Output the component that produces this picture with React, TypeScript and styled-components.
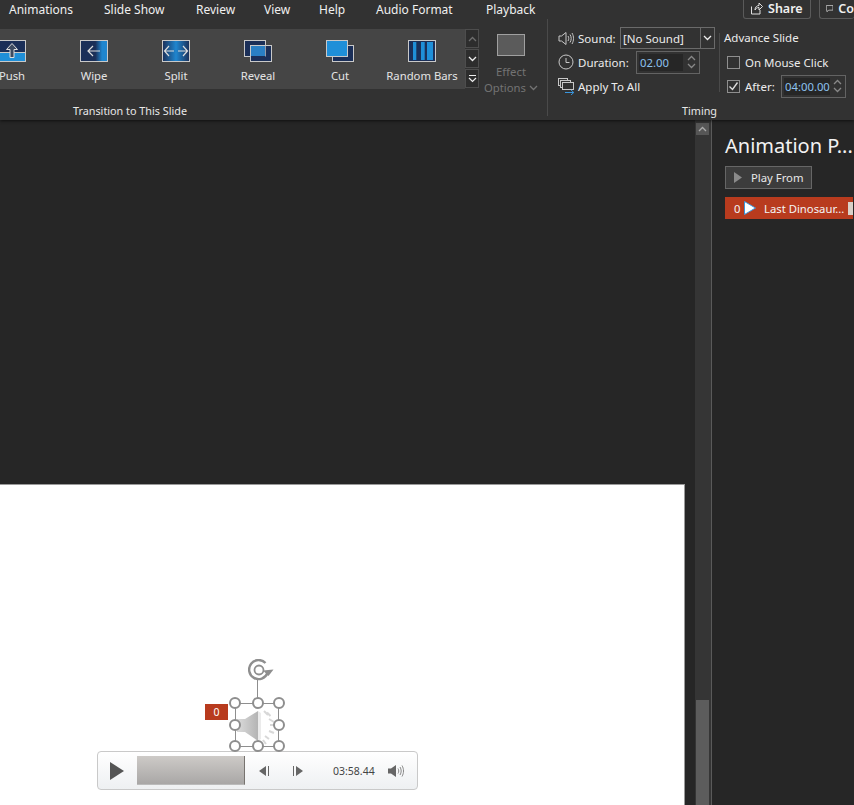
import React from "react";
import styled, { createGlobalStyle } from "styled-components";

const Global = createGlobalStyle`
  html, body { margin: 0; padding: 0; background: #262626; }
  body { font-family: "Noto Sans", "Open Sans", "Liberation Sans", sans-serif; overflow: hidden; }
  * { box-sizing: border-box; }
`;

const Page = styled.div`
  width: 854px; height: 805px; display: flex; flex-direction: column; overflow: hidden; background: #262626;
`;
const Ribbon = styled.header`
  height: 120px; flex: none; background: #323232; display: flex; flex-direction: column; position: relative;
  box-shadow: 0 1px 3px rgba(0,0,0,.6); z-index: 2;
`;
const TabBar = styled.nav`
  height: 19px; flex: none; display: flex; align-items: center; position: relative;
`;
const Tab = styled.span<{ $w: number }>`
  width: ${p => p.$w}px; flex: none; font-size: 12px; color: #f0f0f0; white-space: nowrap; line-height: 17px;
`;
const TabSpacer = styled.div`width: 9px; flex: none;`;
const TopActions = styled.div`
  margin-left: auto; display: flex; gap: 8px; height: 20px; margin-top: -1px; align-self: flex-start;
`;
const TopButton = styled.div<{ $w: number }>`
  width: ${p => p.$w}px; height: 20px; border: 1px solid #5a5a5a; border-top: none; border-radius: 0 0 3px 3px;
  border-right-width: ${p => (p.$w < 60 ? 0 : 1)}px;
  display: flex; align-items: center; gap: 5px; padding-left: 6px; font-size: 12.5px; font-weight: 600; color: #f0f0f0; overflow: hidden;
`;
const Groups = styled.div`flex: 1; display: flex; min-height: 0;`;
const TransitionGroup = styled.section`
  width: 548px; flex: none; border-right: 1px solid #4a4a4a; margin-bottom: 4px; display: flex; flex-direction: column;
`;
const TransitionRow = styled.div`
  display: flex; margin-top: 10px; height: 60px;
`;
const Gallery = styled.div`
  width: 465px; height: 60px; background: #454545; overflow: hidden; flex: none;
`;
const GalleryStrip = styled.div`
  display: flex; margin-left: -29px; height: 60px;
`;
const GalleryItem = styled.div`
  width: 82px; flex: none; display: flex; flex-direction: column; align-items: center; padding-top: 11px; gap: 6px;
  font-size: 11.3px; line-height: 16px; color: #e4e4e4; white-space: nowrap;
`;
const GalleryScroll = styled.div`
  width: 14px; flex: none; display: flex; flex-direction: column; gap: 1px;
`;
const ScrollButton = styled.div<{ $dim?: boolean }>`
  height: 19px; background: #2d2d2d; border: 1px solid #4d4d4d; display: flex; align-items: center; justify-content: center;
  color: ${p => (p.$dim ? "#6e6e6e" : "#eee")};
`;
const EffectOptions = styled.div`
  width: 56px; margin-left: 4px; flex: none; display: flex; flex-direction: column; align-items: center;
  font-size: 11.3px; line-height: 16px; color: #737373; padding-top: 5px; white-space: nowrap;
`;
const EffectIcon = styled.div`
  width: 28px; height: 22px; flex: none; background: #5b5b5b; border: 1px solid #a0a0a0; margin-bottom: 8px;
`;
const OptionsLine = styled.span`display: flex; align-items: center; gap: 3px;`;
const GroupLabel = styled.div<{ $w?: number }>`
  font-size: 10.8px; line-height: 14px; color: #e8e8e8; text-align: center; white-space: nowrap;
  ${p => (p.$w ? `width: ${p.$w}px;` : "")}
`;
const TransitionLabel = styled(GroupLabel)`margin-top: 15px;`;
const TimingLabel = styled(GroupLabel)`margin-top: 6px;`;
const TimingGroup = styled.section`
  flex: 1; display: flex; flex-direction: column; padding-left: 10px; min-width: 0;
`;
const TimingBody = styled.div`display: flex; height: 72px; margin-top: 7px;`;
const TimingLeft = styled.div`width: 161px; flex: none; display: flex; flex-direction: column;`;
const TimingRight = styled.div`
  flex: 1; display: flex; flex-direction: column; border-left: 1px solid #4a4a4a; padding-left: 4px; margin: 7px 0 0 0; height: 59px;
`;
const FieldRow = styled.div<{ $h?: number }>`
  display: flex; align-items: center; height: ${p => p.$h ?? 24}px; font-size: 11.5px; color: #ececec; white-space: nowrap;
`;
const RowIcon = styled.span`width: 20px; flex: none; display: flex; align-items: center;`;
const RowText = styled.span<{ $w?: number }>`
  ${p => (p.$w ? `width: ${p.$w}px; flex: none;` : "")}
`;
const SelectBox = styled.div`
  width: 95px; height: 22px; border: 1px solid #6a6a6a; display: flex; align-items: center; font-size: 11.5px; color: #ececec;
`;
const SelectValue = styled.span`flex: 1; padding-left: 2px;`;
const SelectArrow = styled.span`
  width: 14px; height: 100%; border-left: 1px solid #6a6a6a; display: flex; align-items: center; justify-content: center;
`;
const Spinner = styled.div<{ $w: number }>`
  width: ${p => p.$w}px; height: 23px; flex: none; border: 1px solid #636363; display: flex; align-items: center; padding: 2px 0 2px 2px; font-size: 11.3px;
`;
const SpinValue = styled.span`
  flex: 1; height: 100%; background: #262626; color: #8cc2ee; display: flex; align-items: center; padding-left: 1px;
`;
const SpinArrows = styled.span`
  width: 16px; flex: none; display: flex; flex-direction: column; align-items: center; justify-content: space-around; height: 100%;
`;
const AdvanceTitle = styled.div`flex: none; font-size: 11.5px; color: #ececec; line-height: 16px; margin-top: -3px; height: 16px; margin-bottom: 4px;`;
const CheckRow = styled.div<{ $h: number }>`
  display: flex; flex: none; align-items: center; height: ${p => p.$h}px; padding-left: 3px; gap: 5px; font-size: 11.5px; color: #ececec; white-space: nowrap;
`;
const Check = styled.span`
  width: 13px; height: 13px; border: 1px solid #8f8f8f; flex: none; display: flex; align-items: center; justify-content: center; background: #323232;
`;
const AfterText = styled.span`width: 31px; flex: none;`;

const Workspace = styled.main`flex: 1; display: flex; min-height: 0;`;
const Canvas = styled.div`
  width: 695px; flex: none; padding-top: 364px; overflow: hidden;
`;
const Slide = styled.div`
  width: 685px; height: 321px; background: #fff; border-top: 1px solid #9a9a9a; border-right: 1px solid #9a9a9a; position: relative;
`;
const ScrollTrack = styled.div`
  width: 16px; flex: none; background: #353535; padding: 3px 2px 0 1px; display: flex; flex-direction: column; justify-content: space-between;
`;
const TrackButton = styled.div`
  height: 12px; background: #565656; display: flex; align-items: center; justify-content: center;
`;
const TrackThumb = styled.div`height: 105px; background: #5c5c5c;`;
const Panel = styled.aside`
  flex: 1; border-left: 1px solid #5a5a5a; background: #262626; padding: 11px 0 0 13px; display: flex; flex-direction: column; align-items: flex-start; min-width: 0; overflow: hidden;
`;
const PanelTitle = styled.h2`
  margin: 0; font-weight: 400; font-size: 20px; line-height: 30px; color: #f2f2f2; white-space: nowrap; height: 32px;
`;
const PlayFrom = styled.div`
  width: 87px; height: 23px; margin-top: 3px; background: #3c3c3c; border: 1px solid #666; display: flex; align-items: center; padding-left: 8px; gap: 9px; font-size: 11.3px; color: #e8e8e8; white-space: nowrap;
`;
const AnimRow = styled.div`
  width: 128px; height: 22px; margin-top: 8px; background: #b83b1e; display: flex; align-items: center; padding-left: 9px; font-size: 11.3px; color: #f4f4f4; white-space: nowrap; position: relative;
`;
const AnimOrder = styled.span`width: 10px; flex: none;`;
const AnimName = styled.span`margin-left: 8px;`;
const AnimEnd = styled.span`
  position: absolute; right: 0; top: 5px; width: 5px; height: 13px; background: #d9d0c8;
`;

const Handle = styled.span<{ $x: number; $y: number }>`
  position: absolute; left: ${p => p.$x - 6}px; top: ${p => p.$y - 6}px; width: 12px; height: 12px; border-radius: 50%;
  background: #fff; border: 2px solid #8e8e8e; z-index: 2;
`;
const SelectFrame = styled.div`
  position: absolute; left: 235px; top: 218px; width: 44px; height: 44px; border: 1px solid #8e8e8e;
`;
const RotateStem = styled.div`
  position: absolute; left: 257px; top: 195px; width: 1px; height: 20px; background: #8e8e8e;
`;
const RotateIcon = styled.div`position: absolute; left: 248px; top: 174px; display: flex;`;
const SpeakerIcon = styled.div`position: absolute; left: 236px; top: 218px; display: flex;`;
const OrderBadge = styled.div`
  position: absolute; left: 205px; top: 219px; width: 23px; height: 16px; background: #b83b1e; color: #fff; font-size: 10.5px; display: flex; align-items: center; justify-content: center;
`;
const Player = styled.div`
  position: absolute; left: 97px; top: 266px; width: 321px; height: 39px; border: 1px solid #c9c9c9; border-radius: 4px;
  background: linear-gradient(#ffffff, #eef0f2); display: flex; align-items: center; padding-left: 12px;
`;
const ProgressBar = styled.div`
  width: 108px; height: 29px; margin-left: 13px; flex: none; background: linear-gradient(#cdcac7, #a9a7a6); border-right: 1px solid #77736f; border-bottom: 1px solid #bbb;
`;
const PlayerStep = styled.span<{ $ml: number }>`display: flex; margin-left: ${p => p.$ml}px; flex: none;`;
const TimeText = styled.span`
  margin-left: 30px; width: 43px; flex: none; font-size: 10.5px; color: #444; white-space: nowrap;
`;

const Chev = ({ up, c = "currentColor" }: { up?: boolean; c?: string }) => (
  <svg width="9" height="6" viewBox="0 0 9 6">
    <path d={up ? "M1 5L4.5 1.5L8 5" : "M1 1L4.5 4.5L8 1"} fill="none" stroke={c} strokeWidth="1.3" />
  </svg>
);

type Kind = "push" | "wipe" | "split" | "reveal" | "cut" | "bars";
const TransIcon = ({ kind, id }: { kind: Kind; id: string }) => {
  const navy = "#1b2f58", blue = "#1f8fd8", line = "#c9c9c9";
  return (
    <svg width="28" height="22" viewBox="0 0 28 22">
      <defs>
        <linearGradient id={id} x1="0" x2="1" y1="0" y2="0">
          {kind === "wipe" ? (
            <>
              <stop offset="0.55" stopColor={navy} />
              <stop offset="0.8" stopColor="#1f86cf" />
              <stop offset="1" stopColor="#1f86cf" />
            </>
          ) : (
            <>
              <stop offset="0" stopColor={navy} />
              <stop offset="0.5" stopColor="#1f86cf" />
              <stop offset="1" stopColor={navy} />
            </>
          )}
        </linearGradient>
      </defs>
      {kind === "push" && (
        <>
          <rect x="0.5" y="0.5" width="27" height="21" fill={navy} stroke={line} />
          <rect x="1" y="13" width="26" height="8" fill={blue} />
          <path d="M0 12.5H28" stroke={line} />
          <path d="M14 3.5L8.5 9.5H12V17.5H16V9.5H19.5Z" fill="#3d4a60" stroke="#ddd" />
        </>
      )}
      {kind === "wipe" && (
        <>
          <rect x="0.5" y="0.5" width="27" height="21" fill={`url(#${id})`} stroke={line} />
          <path d="M20 11H8M13 6L8 11L13 16" fill="none" stroke="#ddd" strokeWidth="1.2" />
        </>
      )}
      {kind === "split" && (
        <>
          <rect x="0.5" y="0.5" width="27" height="21" fill={`url(#${id})`} stroke={line} />
          <path d="M3 11H12M16 11H25M7 6L2.5 11L7 16M21 6L25.5 11L21 16" fill="none" stroke="#ddd" strokeWidth="1.2" />
        </>
      )}
      {kind === "reveal" && (
        <>
          <rect x="0.5" y="0.5" width="21" height="16" fill={navy} stroke={line} />
          <rect x="6.5" y="5.5" width="21" height="16" fill={navy} stroke={line} />
          <rect x="7" y="6" width="14" height="10" fill="#2a7fc4" />
          <path d="M6.5 5.5H21.5V16.5" fill="none" stroke={line} strokeOpacity="0.7" />
        </>
      )}
      {kind === "cut" && (
        <>
          <rect x="6.5" y="5.5" width="21" height="16" fill={navy} stroke={line} />
          <rect x="0.5" y="0.5" width="21" height="16" fill={blue} stroke={line} />
        </>
      )}
      {kind === "bars" && (
        <>
          <rect x="0.5" y="0.5" width="27" height="21" fill={navy} stroke={line} strokeWidth="1" />
          <path d="M5 2h3.3v18h-3.3zM13 2h3.7v18h-3.7zM19 2h6v18h-6z" fill={blue} />
        </>
      )}
    </svg>
  );
};

const items: { label: string; kind: Kind }[] = [
  { label: "Push", kind: "push" },
  { label: "Wipe", kind: "wipe" },
  { label: "Split", kind: "split" },
  { label: "Reveal", kind: "reveal" },
  { label: "Cut", kind: "cut" },
  { label: "Random Bars", kind: "bars" },
];
const tabs: [string, number][] = [
  ["Animations", 95], ["Slide Show", 92], ["Review", 68], ["View", 55], ["Help", 57], ["Audio Format", 110], ["Playback", 60],
];
const handles: [number, number][] = [
  [235, 218], [258, 218], [279, 218], [235, 240], [279, 240], [235, 261], [258, 261], [279, 261],
];

const SoundGlyph = () => (
  <svg width="16" height="15" viewBox="0 0 16 15">
    <path d="M1 5H3.5L8 1.5V13.5L3.5 10H1Z" fill="none" stroke="#c8c8c8" />
    <path d="M10 5C11 6.5 11 8.5 10 10M12 3.5C13.6 6 13.6 9 12 11.5M14 2C16 5.5 16 9.5 14 13" fill="none" stroke="#c8c8c8" />
  </svg>
);
const ClockGlyph = () => (
  <svg width="16" height="16" viewBox="0 0 16 16">
    <circle cx="8" cy="8" r="7" fill="none" stroke="#c8c8c8" />
    <path d="M8 4V8.5H11.5" fill="none" stroke="#c8c8c8" />
  </svg>
);
const ApplyGlyph = () => (
  <svg width="17" height="17" viewBox="0 0 17 17">
    <rect x="0.5" y="0.5" width="9" height="7" fill="none" stroke="#c8c8c8" />
    <rect x="2.5" y="2.5" width="10" height="7" fill="#323232" stroke="#c8c8c8" />
    <rect x="4.5" y="4.5" width="11" height="7" fill="#323232" stroke="#c8c8c8" />
    <path d="M7 14.5H15.5M13 12L15.8 14.5L13 17" fill="none" stroke="#3a96dd" />
  </svg>
);

export default function App() {
  return (
    <Page>
      <Global />
      <Ribbon>
        <TabBar>
          <TabSpacer />
          {tabs.map(([t, w]) => (
            <Tab key={t} $w={w}>{t}</Tab>
          ))}
          <TopActions>
            <TopButton $w={68}>
              <svg width="13" height="13" viewBox="0 0 13 13">
                <path d="M1.5 4.5V12H10V8M5 8C5 5 7 3.5 9 3.5V1L12.5 4.5L9 8V5.5C7 5.5 6 6.5 5 8Z" fill="none" stroke="#e0e0e0" />
              </svg>
              Share
            </TopButton>
            <TopButton $w={35}>
              <svg width="11" height="11" viewBox="0 0 11 11">
                <path d="M.5 1H10.5V8H4L1.5 10.5V8H.5Z" fill="none" stroke="#e0e0e0" />
              </svg>
              Co
            </TopButton>
          </TopActions>
        </TabBar>
        <Groups>
          <TransitionGroup>
            <TransitionRow>
              <Gallery>
                <GalleryStrip>
                  {items.map(i => (
                    <GalleryItem key={i.label}>
                      <TransIcon kind={i.kind} id={`g-${i.kind}`} />
                      {i.label}
                    </GalleryItem>
                  ))}
                </GalleryStrip>
              </Gallery>
              <GalleryScroll>
                <ScrollButton $dim><Chev up /></ScrollButton>
                <ScrollButton><Chev /></ScrollButton>
                <ScrollButton>
                  <svg width="9" height="9" viewBox="0 0 9 9">
                    <path d="M1 1.5H8M1 4L4.5 7.5L8 4" fill="none" stroke="#eee" strokeWidth="1.2" />
                  </svg>
                </ScrollButton>
              </GalleryScroll>
              <EffectOptions>
                <EffectIcon />
                <span>Effect</span>
                <OptionsLine>Options <Chev c="#737373" /></OptionsLine>
              </EffectOptions>
            </TransitionRow>
            <TransitionLabel $w={260}>Transition to This Slide</TransitionLabel>
          </TransitionGroup>
          <TimingGroup>
            <TimingBody>
              <TimingLeft>
                <FieldRow>
                  <RowIcon><SoundGlyph /></RowIcon>
                  <RowText $w={42}>Sound:</RowText>
                  <SelectBox>
                    <SelectValue>[No Sound]</SelectValue>
                    <SelectArrow><Chev c="#eee" /></SelectArrow>
                  </SelectBox>
                </FieldRow>
                <FieldRow>
                  <RowIcon><ClockGlyph /></RowIcon>
                  <RowText $w={58}>Duration:</RowText>
                  <Spinner $w={64}>
                    <SpinValue>02.00</SpinValue>
                    <SpinArrows><Chev up c="#888" /><Chev c="#888" /></SpinArrows>
                  </Spinner>
                </FieldRow>
                <FieldRow>
                  <RowIcon><ApplyGlyph /></RowIcon>
                  <RowText>Apply To All</RowText>
                </FieldRow>
              </TimingLeft>
              <TimingRight>
                <AdvanceTitle>Advance Slide</AdvanceTitle>
                <CheckRow $h={24}>
                  <Check />
                  On Mouse Click
                </CheckRow>
                <CheckRow $h={24}>
                  <Check>
                    <svg width="11" height="11" viewBox="0 0 11 11">
                      <path d="M1.5 5.5L4.5 8.5L9.5 1.5" fill="none" stroke="#ddd" strokeWidth="1.4" />
                    </svg>
                  </Check>
                  <AfterText>After:</AfterText>
                  <Spinner $w={65}>
                    <SpinValue>04:00.00</SpinValue>
                    <SpinArrows><Chev up c="#888" /><Chev c="#888" /></SpinArrows>
                  </Spinner>
                </CheckRow>
              </TimingRight>
            </TimingBody>
            <TimingLabel $w={283}>Timing</TimingLabel>
          </TimingGroup>
        </Groups>
      </Ribbon>
      <Workspace>
        <Canvas>
          <Slide>
            <RotateIcon>
              <svg width="26" height="22" viewBox="0 0 26 22">
                <path d="M19.5 14A9.5 9.5 0 1 1 17.5 4" fill="none" stroke="#8e8e8e" strokeWidth="2.4" />
                <circle cx="11" cy="11" r="4.5" fill="none" stroke="#8e8e8e" strokeWidth="1.8" />
                <path d="M15 11.5L25.5 10.5L20.5 17Z" fill="#8e8e8e" />
              </svg>
            </RotateIcon>
            <RotateStem />
            <SelectFrame />
            <SpeakerIcon>
              <svg width="44" height="44" viewBox="0 0 44 44">
                <defs>
                  <linearGradient id="spk" x1="0" x2="1" y1="0" y2="0">
                    <stop offset="0" stopColor="#dcdcdc" />
                    <stop offset="1" stopColor="#b4b4b4" />
                  </linearGradient>
                </defs>
                <path d="M1 16H9L22 8V38L9 29H1Z" fill="url(#spk)" />
                <path d="M22 8L25 10V36L22 38Z" fill="#ebebeb" />
                <path d="M28 8L32 12M31 9.5L34.5 13M33 16L38 19M34 22H39M33 28L38 30M29 33L33 36M27 37L30 41" stroke="#d8d8d8" strokeWidth="2" fill="none" />
              </svg>
            </SpeakerIcon>
            {handles.map(([x, y]) => (
              <Handle key={`${x}-${y}`} $x={x} $y={y} />
            ))}
            <OrderBadge>0</OrderBadge>
            <Player>
              <svg width="14" height="18" viewBox="0 0 14 18">
                <path d="M0 0L14 9L0 18Z" fill="#555" />
              </svg>
              <ProgressBar />
              <PlayerStep $ml={14}>
                <svg width="11" height="10" viewBox="0 0 11 10">
                  <path d="M0 5L7 0V10Z" fill="#666" /><path d="M9 0H10V10H9Z" fill="#666" />
                </svg>
              </PlayerStep>
              <PlayerStep $ml={22}>
                <svg width="11" height="10" viewBox="0 0 11 10">
                  <path d="M1 0H2V10H1Z" fill="#666" /><path d="M4 0L11 5L4 10Z" fill="#666" />
                </svg>
              </PlayerStep>
              <TimeText>03:58.44</TimeText>
              <PlayerStep $ml={12}>
                <svg width="16" height="14" viewBox="0 0 16 14">
                  <path d="M0 4.5H3L8 1V13L3 9.5H0Z" fill="#666" />
                  <path d="M10 4.5C11 6 11 8 10 9.5M12 3C13.6 5.5 13.6 8.5 12 11M14 1.5C16 5 16 9 14 12.5" fill="none" stroke="#888" />
                </svg>
              </PlayerStep>
            </Player>
          </Slide>
        </Canvas>
        <ScrollTrack>
          <TrackButton><Chev up c="#aaa" /></TrackButton>
          <TrackThumb />
        </ScrollTrack>
        <Panel>
          <PanelTitle>Animation P...</PanelTitle>
          <PlayFrom>
            <svg width="8" height="11" viewBox="0 0 8 11"><path d="M0 0L8 5.5L0 11Z" fill="#8a8a8a" /></svg>
            Play From
          </PlayFrom>
          <AnimRow>
            <AnimOrder>0</AnimOrder>
            <svg width="12" height="14" viewBox="0 0 12 14"><path d="M.5 .5L11.5 7L.5 13.5Z" fill="#fff" stroke="#3a96dd" /></svg>
            <AnimName>Last Dinosaur...</AnimName>
            <AnimEnd />
          </AnimRow>
        </Panel>
      </Workspace>
    </Page>
  );
}
